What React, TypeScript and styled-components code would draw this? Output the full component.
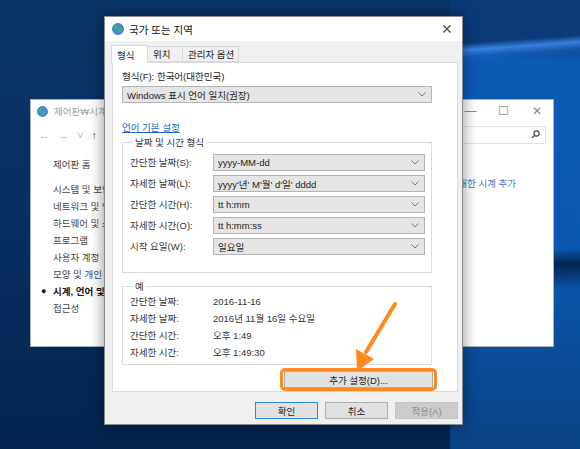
import { Fragment } from 'react';
import styled, { createGlobalStyle } from 'styled-components';

const GlobalStyle = createGlobalStyle`
  html, body { margin: 0; padding: 0; }
  body {
    font-family: 'Liberation Sans', 'Noto Sans CJK KR', sans-serif;
    overflow: hidden;
  }
`;

const cpLinks = ['시스템 및 보안', '네트워크 및 인터넷', '하드웨어 및 소리', '프로그램', '사용자 계정', '모양 및 개인 설정'];

const formatRows = [
  { label: '간단한 날짜(S):', value: 'yyyy-MM-dd' },
  { label: '자세한 날짜(L):', value: "yyyy'년' M'월' d'일' dddd" },
  { label: '간단한 시간(H):', value: 'tt h:mm' },
  { label: '자세한 시간(O):', value: 'tt h:mm:ss' },
  { label: '시작 요일(W):', value: '일요일' },
];

const exampleRows = [
  { label: '간단한 날짜:', value: '2016-11-16' },
  { label: '자세한 날짜:', value: '2016년 11월 16일 수요일' },
  { label: '간단한 시간:', value: '오후 1:49' },
  { label: '자세한 시간:', value: '오후 1:49:30' },
];

const Desktop = styled.div`
  position: relative;
  width: 580px;
  height: 449px;
  overflow: hidden;
  font-size: 9.5px;
  background:
    linear-gradient(176deg, transparent 0 44px, rgba(70, 150, 255, 0.75) 51px, rgba(40, 120, 230, 0.3) 58px, transparent 64px) right top / 130px 120px no-repeat,
    linear-gradient(179deg, transparent 0 250px, rgba(2, 28, 66, 0.85) 266px, transparent 292px) right top / 130px 449px no-repeat,
    linear-gradient(180deg, #0a3a78 0 45px, #0b5ab4 60px, #0a58b0 250px, #0a4f9f 330px, #0a4383 449px) right top / 130px 449px no-repeat,
    linear-gradient(180deg, #0b3569 0%, #072d5e 55%, #03244f 100%);
`;

/* ---------- control panel window behind ---------- */

const BackWindow = styled.div`
  position: absolute;
  left: 30px;
  top: 99px;
  width: 524px;
  height: 248px;
  box-sizing: border-box;
  background: #fff;
  border: 1px solid #aab4bf;
  display: flex;
  flex-direction: column;
`;

const BackTitleBar = styled.div`
  height: 22px;
  display: flex;
  align-items: center;
  padding-left: 6px;
  gap: 6px;
  color: #a0a0a0;
`;

const BackTitle = styled.span`
  flex: 1;
  white-space: nowrap;
`;

const WinControls = styled.div`
  display: flex;
  align-self: stretch;
`;

const WinControl = styled.span`
  width: 33px;
  display: flex;
  align-items: center;
  justify-content: center;
  color: #8a8a8a;
  font-size: 12px;
`;

const NavRow = styled.div`
  height: 21px;
  display: flex;
  align-items: center;
  gap: 8px;
  padding: 2px 7px 0 8px;
  color: #b8b8b8;
  font-size: 11px;
`;

const NavUp = styled.span`
  color: #555;
`;

const AddressBar = styled.div`
  flex: 1;
`;

const SearchBox = styled.div`
  width: 150px;
  height: 16px;
  border: 1px solid #e3e3e3;
  display: flex;
  align-items: center;
  justify-content: flex-end;
  padding-right: 5px;
  color: #444;
`;

const BackBody = styled.div`
  flex: 1;
  display: flex;
`;

const Sidebar = styled.div`
  width: 190px;
  padding: 10px 0 0 10px;
  display: flex;
  flex-direction: column;
  color: #444;
`;

const SideItem = styled.div<{ $bold?: boolean; $gap?: number }>`
  height: 17px;
  display: flex;
  align-items: center;
  white-space: nowrap;
  margin-top: ${({ $gap }) => $gap ?? 0}px;
  font-weight: ${({ $bold }) => ($bold ? 'bold' : 'normal')};
  color: ${({ $bold }) => ($bold ? '#111' : '#444')};
`;

const Bullet = styled.span<{ $show?: boolean }>`
  width: 12px;
  flex-shrink: 0;
  font-size: 9px;
  visibility: ${({ $show }) => ($show ? 'visible' : 'hidden')};
`;

const BackMain = styled.div`
  flex: 1;
  display: flex;
  justify-content: flex-end;
  align-items: flex-start;
  padding: 31px 37px 0 0;
`;

const ClockLink = styled.span`
  color: #3c78c0;
  white-space: nowrap;
`;

/* ---------- region dialog ---------- */

const Dialog = styled.div`
  position: absolute;
  left: 104px;
  top: 16px;
  width: 359px;
  height: 409px;
  box-sizing: border-box;
  background: #f0f0f0;
  border: 1px solid #8c8c8c;
  box-shadow: 0 0 14px rgba(0, 0, 0, 0.45);
  display: flex;
  flex-direction: column;
  color: #222;
`;

const DialogTitleBar = styled.div`
  height: 24px;
  background: #fff;
  display: flex;
  align-items: center;
  gap: 5px;
  padding: 0 4px 0 7px;
  font-size: 10.5px;
  color: #111;
`;

const DialogTitle = styled.span`
  flex: 1;
`;

const CloseButton = styled.span`
  width: 22px;
  text-align: center;
  font-size: 14px;
  color: #555;
`;

const DialogBody = styled.div`
  flex: 1;
  display: flex;
  flex-direction: column;
  padding: 4px 5px 0 6px;
`;

const TabStrip = styled.div`
  display: flex;
  height: 17px;
  align-items: flex-end;
`;

const Tab = styled.div<{ $active?: boolean; $w: number }>`
  width: ${({ $w }) => $w}px;
  height: ${({ $active }) => ($active ? 18 : 16)}px;
  box-sizing: border-box;
  border: 1px solid #d9d9d9;
  border-bottom: ${({ $active }) => ($active ? 'none' : '1px solid #d9d9d9')};
  margin-left: ${({ $active }) => ($active ? 0 : -1)}px;
  background: ${({ $active }) => ($active ? '#fff' : '#f0f0f0')};
  position: relative;
  z-index: ${({ $active }) => ($active ? 1 : 0)};
  display: flex;
  align-items: center;
  padding-left: 5px;
  margin-bottom: ${({ $active }) => ($active ? -1 : 0)}px;
`;

const TabPanel = styled.div`
  margin-left: 1px;
  height: 330px;
  box-sizing: border-box;
  background: #fff;
  border: 1px solid #d9d9d9;
  padding: 7px 0 0 9px;
  display: flex;
  flex-direction: column;
  width: 346px;
`;

const Column = styled.div`
  width: 310px;
  display: flex;
  flex-direction: column;
`;

const FieldLabel = styled.div`
  height: 13px;
  line-height: 13px;
`;

const SelectBox = styled.div<{ $top?: number }>`
  height: 17px;
  margin-top: ${({ $top }) => $top ?? 0}px;
  box-sizing: border-box;
  background: #e5e5e5;
  border: 1px solid #b4b4b4;
  display: flex;
  align-items: center;
  padding: 0 5px 0 4px;
  color: #222;
`;

const SelectText = styled.span`
  flex: 1;
  white-space: nowrap;
`;

const LangLink = styled.span`
  margin-top: 18px;
  height: 13px;
  line-height: 13px;
  color: #1a6cc8;
  text-decoration: underline;
  align-self: flex-start;
`;

const GroupBox = styled.fieldset<{ $top: number; $padTop: number; $padBottom: number }>`
  margin: ${({ $top }) => $top}px 0 0 0;
  padding: ${({ $padTop }) => $padTop}px 6px ${({ $padBottom }) => $padBottom}px 7px;
  border: 1px solid #dcdcdc;
  min-width: 0;
`;

const Legend = styled.legend`
  padding: 0 2px;
  margin-left: 3px;
  height: 13px;
  line-height: 13px;
  color: #333;
`;

const FormGrid = styled.div<{ $rowGap: number }>`
  display: grid;
  grid-template-columns: 83px 1fr;
  row-gap: ${({ $rowGap }) => $rowGap}px;
  align-items: center;
`;

const GridCell = styled.span<{ $h: number }>`
  height: ${({ $h }) => $h}px;
  line-height: ${({ $h }) => $h}px;
  white-space: nowrap;
  color: #333;
`;

const MoreRow = styled.div`
  display: flex;
  justify-content: flex-end;
  margin: 3px -5px 0 0;
`;

const Highlight = styled.div`
  border: 3px solid #ff8a1e;
  border-radius: 5px;
  padding: 0 1px;
`;

const PushButton = styled.div<{ $width: number; $primary?: boolean; $disabled?: boolean }>`
  width: ${({ $width }) => $width}px;
  height: 17px;
  box-sizing: border-box;
  display: flex;
  align-items: center;
  justify-content: center;
  background: ${({ $disabled }) => ($disabled ? '#cccccc' : '#e1e1e1')};
  border: 1px solid ${({ $primary, $disabled }) => ($primary ? '#2f86d8' : $disabled ? '#c4c4c4' : '#adadad')};
  color: ${({ $disabled }) => ($disabled ? '#8a8a8a' : '#222')};
`;

const Footer = styled.div`
  display: flex;
  justify-content: flex-end;
  gap: 7px;
  padding: 10px 0 0 0;
  margin-right: -1px;
`;

const ArrowLayer = styled.svg`
  position: absolute;
  left: 0;
  top: 0;
  pointer-events: none;
`;

const Chevron = () => (
  <svg width="8" height="5" viewBox="0 0 8 5">
    <polyline points="0.5,0.5 4,4 7.5,0.5" fill="none" stroke="#777" strokeWidth="1" />
  </svg>
);

const GlobeIcon = ({ size }: { size: number }) => (
  <svg width={size} height={size} viewBox="0 0 12 12">
    <circle cx="6" cy="6" r="5.5" fill="#3f8fd8" />
    <path d="M3 2.5 C4.5 2 5.5 3 4.8 4.2 C4 5.4 2.4 5 2 6.5 C1.2 5 1.6 3.4 3 2.5 Z" fill="#5ab04a" />
    <path d="M7 5.5 C8.5 5.2 9.8 6.5 9 8 C8.4 9.3 7 9.8 6.5 8.6 C6.2 7.6 6.2 6 7 5.5 Z" fill="#5ab04a" />
    <circle cx="6" cy="6" r="5.5" fill="none" stroke="#2b6cb0" strokeWidth="0.8" />
  </svg>
);

const SearchIcon = () => (
  <svg width="9" height="9" viewBox="0 0 9 9">
    <circle cx="5.5" cy="3.5" r="2.6" fill="none" stroke="#444" strokeWidth="1.1" />
    <line x1="3.6" y1="5.4" x2="1" y2="8" stroke="#444" strokeWidth="1.3" />
  </svg>
);

const App = () => {
  return (
    <>
      <GlobalStyle />
      <Desktop>
        <BackWindow>
          <BackTitleBar>
            <GlobeIcon size={11} />
            <BackTitle>제어판₩시계, 언어 및 국가별 옵션</BackTitle>
            <WinControls>
              <WinControl>—</WinControl>
              <WinControl>☐</WinControl>
              <WinControl>✕</WinControl>
            </WinControls>
          </BackTitleBar>
          <NavRow>
            <span>←</span>
            <span>→</span>
            <span>˅</span>
            <NavUp>↑</NavUp>
            <AddressBar />
            <SearchBox>
              <SearchIcon />
            </SearchBox>
          </NavRow>
          <BackBody>
            <Sidebar>
              <SideItem>
                <Bullet />
                제어판 홈
              </SideItem>
              {cpLinks.map((link, i) => (
                <SideItem key={link} $gap={i === 0 ? 8 : 0}>
                  <Bullet />
                  {link}
                </SideItem>
              ))}
              <SideItem $bold>
                <Bullet $show>●</Bullet>
                시계, 언어 및 국가별 옵션
              </SideItem>
              <SideItem>
                <Bullet />
                접근성
              </SideItem>
            </Sidebar>
            <BackMain>
              <ClockLink>다른 표준 시간대에 대한 시계 추가</ClockLink>
            </BackMain>
          </BackBody>
        </BackWindow>

        <Dialog>
          <DialogTitleBar>
            <GlobeIcon size={12} />
            <DialogTitle>국가 또는 지역</DialogTitle>
            <CloseButton>✕</CloseButton>
          </DialogTitleBar>
          <DialogBody>
            <TabStrip>
              <Tab $active $w={37}>형식</Tab>
              <Tab $w={36}>위치</Tab>
              <Tab $w={57}>관리자 옵션</Tab>
            </TabStrip>
            <TabPanel>
              <Column>
                <FieldLabel>형식(F): 한국어(대한민국)</FieldLabel>
                <SelectBox $top={3}>
                  <SelectText>Windows 표시 언어 일치(권장)</SelectText>
                  <Chevron />
                </SelectBox>
                <LangLink>언어 기본 설정</LangLink>
                <GroupBox $top={2} $padTop={5} $padBottom={17}>
                  <Legend>날짜 및 시간 형식</Legend>
                  <FormGrid $rowGap={4}>
                    {formatRows.map((row) => (
                      <Fragment key={row.label}>
                        <GridCell $h={17}>{row.label}</GridCell>
                        <SelectBox>
                          <SelectText>{row.value}</SelectText>
                          <Chevron />
                        </SelectBox>
                      </Fragment>
                    ))}
                  </FormGrid>
                </GroupBox>
                <GroupBox $top={7} $padTop={1} $padBottom={4}>
                  <Legend>예</Legend>
                  <FormGrid $rowGap={2}>
                    {exampleRows.map((row) => (
                      <Fragment key={row.label}>
                        <GridCell $h={15}>{row.label}</GridCell>
                        <GridCell $h={15}>{row.value}</GridCell>
                      </Fragment>
                    ))}
                  </FormGrid>
                </GroupBox>
                <MoreRow>
                  <Highlight>
                    <PushButton $width={149}>추가 설정(D)...</PushButton>
                  </Highlight>
                </MoreRow>
              </Column>
            </TabPanel>
            <Footer>
              <PushButton $width={63} $primary>확인</PushButton>
              <PushButton $width={63}>취소</PushButton>
              <PushButton $width={63} $disabled>적용(A)</PushButton>
            </Footer>
          </DialogBody>
        </Dialog>

        <ArrowLayer width="580" height="449" viewBox="0 0 580 449">
          <line x1="395" y1="304" x2="366" y2="352" stroke="#ff8a1e" strokeWidth="4" strokeLinecap="round" />
          <polygon points="357,371 356,349 374,359" fill="#ff8a1e" />
        </ArrowLayer>
      </Desktop>
    </>
  );
};

export default App;
